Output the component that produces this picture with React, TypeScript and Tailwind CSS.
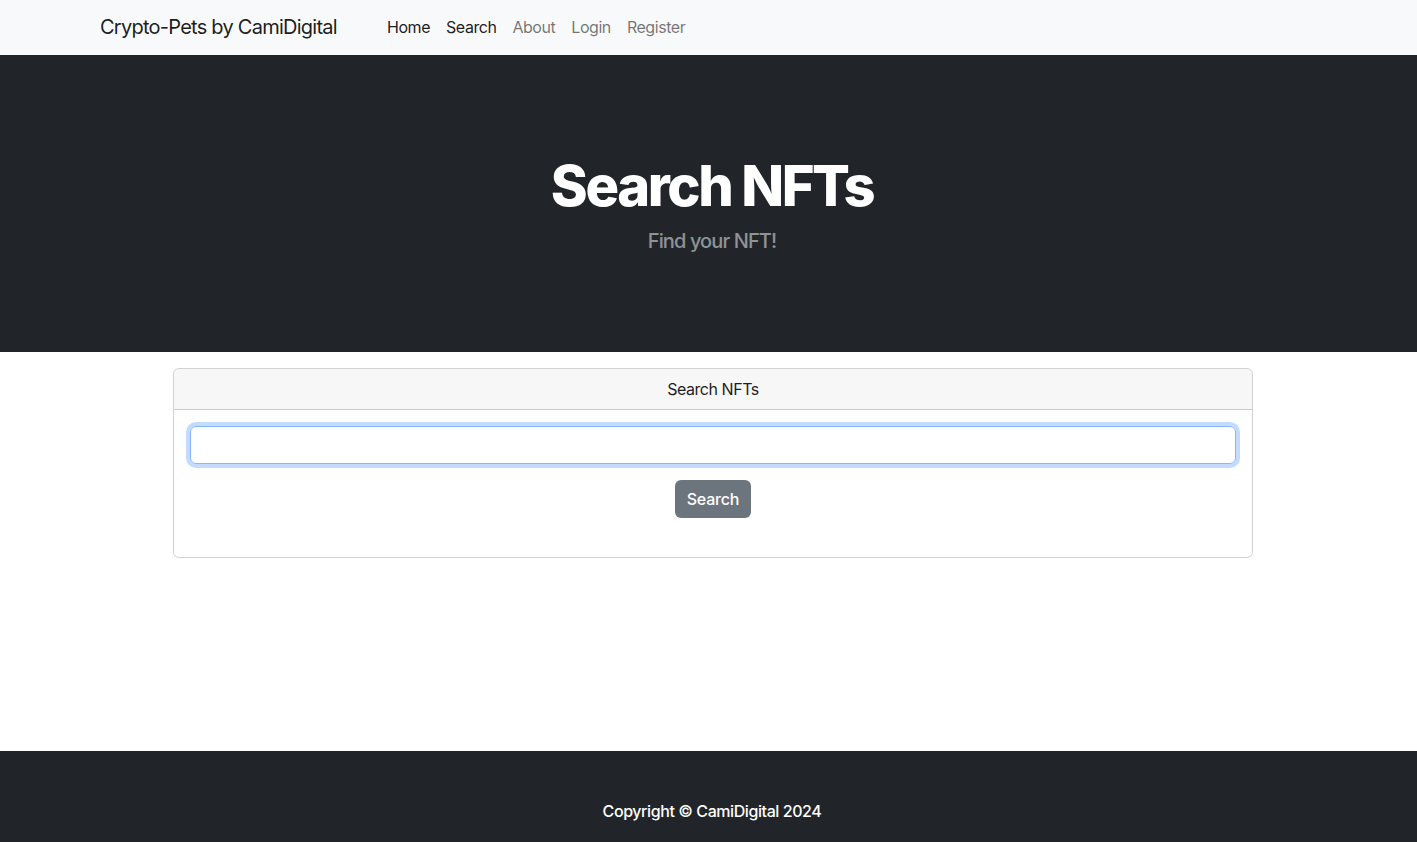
import React from "react";

export default function App() {
  const font = { fontFamily: "Inter, 'Noto Sans', 'Liberation Sans', sans-serif" };
  return (
    <div className="min-h-screen bg-white text-[#212529]" style={font}>
      <nav className="h-[55px] bg-[#f8f9fa] flex items-center pb-[2px]">
        <div className="flex items-center pl-[100px]">
          <a className="w-[279px] text-[20px] leading-[30px] text-[rgba(0,0,0,0.9)] tracking-[-0.75px]">
            Crypto-Pets by CamiDigital
          </a>
          <ul className="flex items-center text-[16px] leading-[24px] tracking-[-0.45px]">
            <li className="px-2 text-[rgba(0,0,0,0.9)]">Home</li>
            <li className="px-2 text-[rgba(0,0,0,0.9)]">Search</li>
            <li className="px-2 text-[rgba(0,0,0,0.55)]">About</li>
            <li className="px-2 text-[rgba(0,0,0,0.55)]">Login</li>
            <li className="px-2 text-[rgba(0,0,0,0.55)]">Register</li>
          </ul>
        </div>
      </nav>

      <header className="bg-[#212529] pt-[98px] pb-[96px] pl-[7px] flex flex-col items-center">
        <h1 className="text-[56px] leading-[67px] font-extrabold text-white tracking-[-2.4px] mb-[6px]">
          Search NFTs
        </h1>
        <p className="text-[20px] leading-[30px] text-[rgba(255,255,255,0.5)] font-medium tracking-[-0.9px]">
          Find your NFT!
        </p>
      </header>

      <main className="min-h-[399px] pt-4">
        <div className="ml-[173px] w-[1080px] border border-[rgba(0,0,0,0.175)] rounded-[6px] overflow-hidden">
          <div className="bg-[rgba(0,0,0,0.03)] border-b border-[rgba(0,0,0,0.175)] h-[41px] flex items-center justify-center text-[16px] text-[rgba(0,0,0,0.9)] tracking-[-0.45px]">
            Search NFTs
          </div>
          <div className="p-4 pb-[39px] flex flex-col items-center">
            <input
              className="w-full h-[38px] rounded-[6px] border border-[#86b7fe] shadow-[0_0_0_4px_rgba(13,110,253,0.25)] outline-none px-3"
              type="text"
            />
            <button className="mt-4 h-[38px] px-3 rounded-[6px] bg-[#6c757d] text-white text-[16px] font-medium tracking-[-0.2px]">
              Search
            </button>
          </div>
        </div>
      </main>

      <footer className="bg-[#212529] py-12 pl-[7px]">
        <p className="text-center text-white text-[16px] leading-[24px] font-medium tracking-[-0.42px]">
          Copyright © CamiDigital 2024
        </p>
      </footer>
    </div>
  );
}
